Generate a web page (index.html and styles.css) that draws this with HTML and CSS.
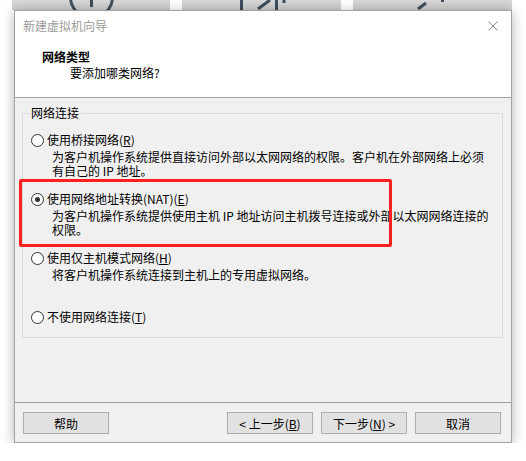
FILE: index.html
```html
<!DOCTYPE html>
<html lang="zh-CN">
<head>
    <meta charset="UTF-8">
    <meta name="viewport" content="width=device-width, initial-scale=1.0">
    <title>新建虚拟机向导</title>
    <link rel="stylesheet" href="styles.css">
</head>
<body>

    <!-- Toolbar tiles of the window behind the dialog -->
    <div class="backdrop">
        <div class="tile">
            <svg width="158" height="10" viewBox="0 0 158 10">
                <circle cx="79.5" cy="-3" r="21" class="glyph"/>
                <path d="M79.5 -12 V7 M70 -3 H89" class="glyph"/>
            </svg>
        </div>
        <div class="tile">
            <svg width="159" height="10" viewBox="0 0 159 10">
                <path d="M59.5 0 V10 M94.5 0 V10 M76 9 L88 0" class="glyph"/>
                <path d="M102 -2 V3" class="glyph"/>
            </svg>
        </div>
        <div class="tile">
            <svg width="159" height="10" viewBox="0 0 159 10">
                <path d="M65 9 L73 3" class="glyph"/>
                <path d="M89.5 -2 V2" class="glyph"/>
            </svg>
        </div>
    </div>

    <div class="dialog">
        <div class="header">
            <div class="titlebar">
                <span class="title">新建虚拟机向导</span>
                <svg class="close" width="10" height="10" viewBox="0 0 10 10">
                    <path d="M0.5 0.5 L9.5 9.5 M9.5 0.5 L0.5 9.5"/>
                </svg>
            </div>
            <div class="heading-title">网络类型</div>
            <div class="heading-sub">要添加哪类网络?</div>
        </div>

        <div class="body">
            <fieldset class="group">
                <legend>网络连接</legend>

                <div class="option">
                    <span class="radio"></span>
                    <div class="option-text">
                        <div class="option-label">使用桥接网络(<u>R</u>)</div>
                        <div class="option-desc">为客户机操作系统提供直接访问外部以太网网络的权限。客户机在外部网络上必须</div>
                        <div class="option-desc">有自己的 IP 地址。</div>
                    </div>
                </div>

                <div class="option">
                    <span class="radio checked"></span>
                    <div class="option-text">
                        <div class="option-label">使用网络地址转换(NAT)(<u>E</u>)</div>
                        <div class="option-desc">为客户机操作系统提供使用主机 IP 地址访问主机拨号连接或外部以太网网络连接的</div>
                        <div class="option-desc">权限。</div>
                    </div>
                </div>

                <div class="option">
                    <span class="radio"></span>
                    <div class="option-text">
                        <div class="option-label">使用仅主机模式网络(<u>H</u>)</div>
                        <div class="option-desc">将客户机操作系统连接到主机上的专用虚拟网络。</div>
                    </div>
                </div>

                <div class="option">
                    <span class="radio"></span>
                    <div class="option-text">
                        <div class="option-label">不使用网络连接(<u>T</u>)</div>
                    </div>
                </div>
            </fieldset>
        </div>

        <div class="footer">
            <button class="btn">帮助</button>
            <button class="btn push">&lt; 上一步(<u>B</u>)</button>
            <button class="btn">下一步(<u>N</u>) &gt;</button>
            <button class="btn">取消</button>
        </div>

        <!-- red annotation box drawn over the NAT option -->
        <div class="mark"></div>
    </div>

</body>
</html>
```

FILE: styles.css
```css
body {
    margin: 0;
    background-color: #ffffff;
    font-family: "Noto Sans CJK SC", "Liberation Sans", sans-serif;
    font-size: 12px;
    color: #000;
}

.backdrop {
    display: flex;
    height: 10px;
    padding-left: 12px;
    gap: 11px;
}
.tile {
    height: 10px;
    background: linear-gradient(#d8d8d8, #cdcdcd);
    overflow: hidden;
}
.tile + .tile {
    margin-left: 1px;
}
.tile svg {
    display: block;
}
.glyph {
    fill: none;
    stroke: #3e4e5c;
    stroke-width: 3;
}

.dialog {
    position: relative;
    box-sizing: border-box;
    width: 498px;
    height: 433px;
    margin-left: 14px;
    border: 1px solid #a3a3a3;
    background-color: #f0f0f0;
    box-shadow: 0 2px 12px rgba(0, 0, 0, 0.3);
}

.header {
    height: 86px;
    background-color: #ffffff;
    border-bottom: 1px solid #a0a0a0;
}
.titlebar {
    display: flex;
    align-items: center;
    justify-content: space-between;
    height: 29px;
    padding: 0 13px 0 8px;
}
.title {
    color: #9a9a9a;
}
.close path {
    stroke: #8a8a8a;
    stroke-width: 1;
}
.heading-title {
    margin-top: 10px;
    padding-left: 27px;
    font-weight: bold;
    line-height: 14px;
}
.heading-sub {
    margin-top: 2px;
    padding-left: 55px;
    line-height: 14px;
}

.body {
    height: 304px;
    padding-top: 8px;
    box-sizing: border-box;
}
.group {
    box-sizing: border-box;
    width: 481px;
    height: 232px;
    margin: 0 0 0 7px;
    padding: 13px 0 0 8px;
    border: 1px solid #dcdcdc;
}
.group legend {
    margin-left: -2px;
    padding: 0 2px;
    line-height: 14px;
}

.option {
    display: flex;
    height: 59px;
}
.radio {
    box-sizing: border-box;
    flex: none;
    width: 13px;
    height: 13px;
    margin: 1px 3px 0 0;
    border: 1px solid #333;
    border-radius: 50%;
    background-color: #fff;
    display: flex;
    align-items: center;
    justify-content: center;
}
.radio.checked::after {
    content: "";
    width: 5px;
    height: 5px;
    border-radius: 50%;
    background-color: #333;
}
.option-label {
    line-height: 16px;
    margin-top: -1px;
}
.option-desc {
    margin-left: 5px;
    line-height: 13.5px;
    white-space: nowrap;
}
.option-label + .option-desc {
    margin-top: 2px;
}

.footer {
    display: flex;
    gap: 8px;
    height: 39px;
    box-sizing: border-box;
    padding: 9px 10px 0 8px;
    border-top: 1px solid #a0a0a0;
}
.btn {
    width: 86px;
    height: 22px;
    padding: 0;
    background-color: #e1e1e1;
    border: 1px solid #adadad;
    font-family: inherit;
    font-size: 12px;
    color: #000;
}
.push {
    margin-left: auto;
}

.mark {
    position: absolute;
    left: 4px;
    top: 168px;
    width: 373px;
    height: 68px;
    box-sizing: border-box;
    border: 3px solid #ff2020;
    border-radius: 2px;
}
```
